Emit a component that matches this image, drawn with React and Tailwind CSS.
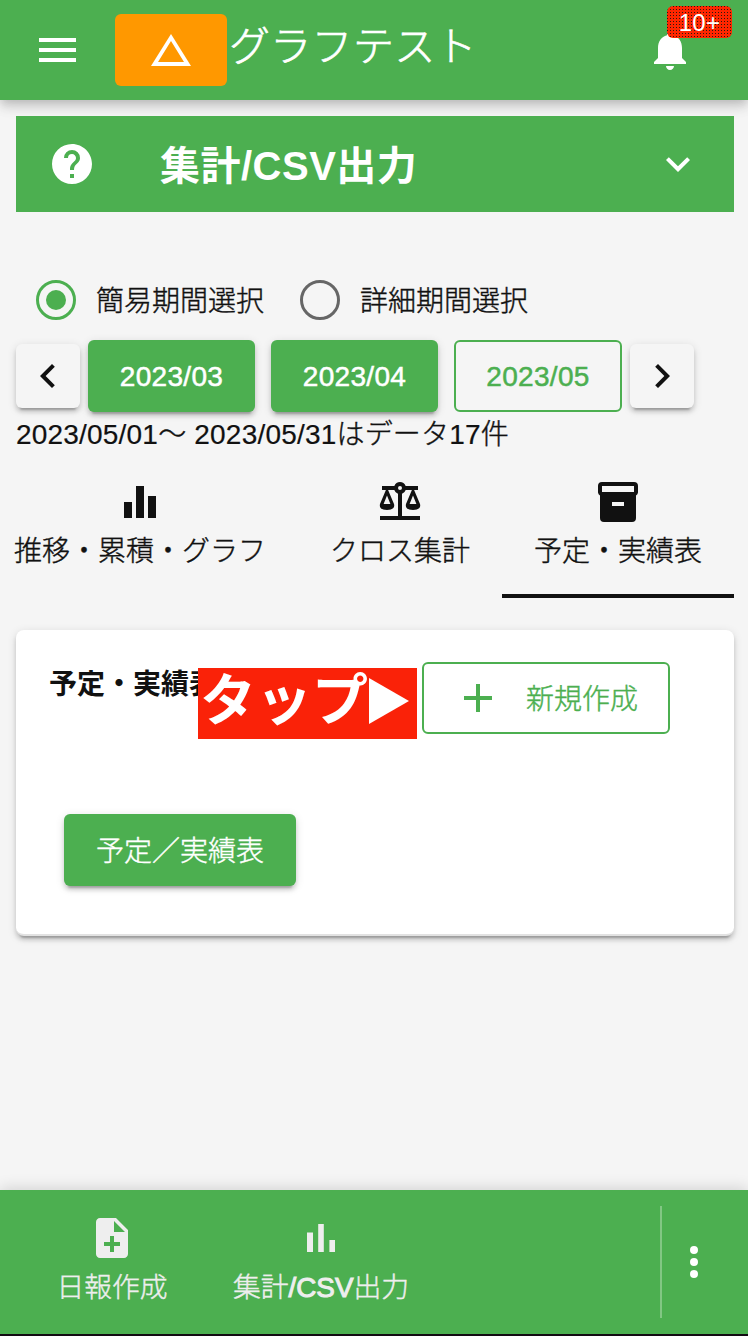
import React from "react";

const jp = "font-['Liberation_Sans','Noto_Sans_CJK_JP',sans-serif]";
const thin = "font-light [-webkit-text-stroke:0.4px_currentColor]";
const raised =
  "shadow-[0_6px_2px_-4px_rgba(0,0,0,0.2),0_4px_4px_rgba(0,0,0,0.14),0_2px_10px_rgba(0,0,0,0.12)]";

function Icon({ d, className = "" }) {
  return (
    <svg viewBox="0 0 24 24" className={"size-12 shrink-0 fill-current " + className}>
      <path d={d} fillRule="evenodd" />
    </svg>
  );
}

const paths = {
  menu: "M3 6h18.5v2H3zM3 11h18.5v2H3zM3 16h18.5v2H3z",
  bell: "M12 22c1.1 0 2-.9 2-2h-4c0 1.1.89 2 2 2zm6-6v-5c0-3.07-1.64-5.64-4.5-6.32V4c0-.83-.67-1.5-1.5-1.5s-1.5.67-1.5 1.5v.68C7.63 5.36 6 7.92 6 11v5l-2 2v1h16v-1l-2-2z",
  help: "M15.07,11.25L14.17,12.17C13.45,12.89 13,13.5 13,15H11V14.5C11,13.39 11.45,12.39 12.17,11.67L13.41,10.41C13.78,10.05 14,9.55 14,9C14,7.89 13.1,7 12,7A2,2 0 0,0 10,9H8A4,4 0 0,1 12,5A4,4 0 0,1 16,9C16,9.88 15.64,10.67 15.07,11.25M13,19H11V17H13M12,2A10,10 0 0,0 2,12A10,10 0 0,0 12,22A10,10 0 0,0 22,12C22,6.47 17.5,2 12,2Z",
  down: "M7.41,8.58L12,13.17L16.59,8.58L18,10L12,16L6,10L7.41,8.58Z",
  left: "M15.41,16.58L10.83,12L15.41,7.41L14,6L8,12L14,18L15.41,16.58Z",
  right: "M8.59,16.58L13.17,12L8.59,7.41L10,6L16,12L10,18L8.59,16.58Z",
  bars: "M4 12h4v8H4zM10 4h4v16h-4zM16 9h4v11h-4z",
  scale: "M12,2C10.73,2 9.6,2.8 9.18,4H3V6H4.95L2,13C1.53,15 3,16 5.5,16C8,16 9.56,15 9,13L6.05,6H9.17C9.5,6.85 10.15,7.5 11,7.83V19H2V21H22V19H13V7.82C13.85,7.5 14.5,6.85 14.82,6H17.95L15,13C14.53,15 16,16 18.5,16C21,16 22.56,15 22,13L19.05,6H21V4H14.83C14.4,2.8 13.27,2 12,2M12,4A1,1 0 0,1 13,5A1,1 0 0,1 12,6A1,1 0 0,1 11,5A1,1 0 0,1 12,4M5.5,8.75L7.2,13H3.8L5.5,8.75M18.5,8.75L20.2,13H16.8L18.5,8.75Z",
  archive: "M4 2h16a2 2 0 0 1 2 2v3.2a2 2 0 0 1-1 1.5V20a2 2 0 0 1-2 2H5a2 2 0 0 1-2-2V8.700a2 2 0 0 1-1-1.500V4a2 2 0 0 1 2-2zM4 4v3h16V4zM9 12v2h6v-2z",
  plus: "M19,13H13V19H11V13H5V11H11V5H13V11H19V13Z",
  note: "M14 2H6c-1.100 0-2 .9-2 2v16c0 1.100.9 2 2 2h12c1.100 0 2-.9 2-2V8l-6-6zm2 14h-3v3h-2v-3H8v-2h3v-3h2v3h3v2zm-3-7V3.500L18.500 9H13z",
  chart: "M5 9.200h3V19H5zM10.600 5h2.800v14h-2.800zM16.200 13H19v6h-2.800z",
  dots: "M12 8a2 2 0 1 0 0-4 2 2 0 0 0 0 4zM12 14a2 2 0 1 0 0-4 2 2 0 0 0 0 4zM12 20a2 2 0 1 0 0-4 2 2 0 0 0 0 4z",
};

function Header() {
  return (
    <header className="relative flex h-[100px] shrink-0 bg-[#4caf50] text-white shadow-[0_4px_8px_-2px_rgba(0,0,0,0.12),0_8px_10px_rgba(0,0,0,0.1),0_2px_20px_rgba(0,0,0,0.08)]">
      <Icon d={paths.menu} className="mt-[26px] ml-[33px]" />
      <div className="mt-[14px] ml-[34px] flex h-[72px] w-[112px] items-center justify-center rounded-md bg-[#ff9800]">
        <svg viewBox="0 0 40 32" className="h-8 w-10 fill-white">
          <path d="M20 0L40 32H0zM20 7L7 28H33z" fillRule="evenodd" />
        </svg>
      </div>
      <h1 className="mt-[17px] ml-[2px] text-[41px] leading-[60px] tracking-[0.3px] font-light [-webkit-text-stroke:0.7px_currentColor]">
        グラフテスト
      </h1>
      <div className="relative mt-[26px] mr-[54px] ml-auto">
        <Icon d={paths.bell} />
        <span className="absolute -top-5 left-[21px] flex h-8 w-[65px] items-center justify-center rounded-md bg-[#ff2600] bg-[conic-gradient(from_0deg_at_1px_1px,transparent_75%,#2a1a10_75%),conic-gradient(from_0deg_at_3px_3px,transparent_75%,#ff2600_75%)] bg-[size:3px_3px] pt-[2px] text-2xl tracking-[0.3px]">
          10+
        </span>
      </div>
    </header>
  );
}

function Radio({ on, label }) {
  return (
    <label className="flex items-center">
      <span
        className={
          "mr-5 flex size-10 items-center justify-center rounded-full " +
          (on ? "border-[3.5px] border-[#4caf50]" : "border-[3.5px] border-[#666]")
        }
      >
        {on && <span className="size-5 rounded-full bg-[#4caf50]" />}
      </span>
      <span className={"pt-[3px] text-[28px] leading-10 " + thin}>{label}</span>
    </label>
  );
}

function Month({ children, outlined }) {
  return (
    <button
      className={
        "h-[72px] rounded-md pt-[2px] text-[28px] tracking-[0.3px] [-webkit-text-stroke:0.5px_currentColor] " +
        (outlined
          ? "w-[168px] border-2 border-[#4caf50] text-[#4caf50]"
          : "w-[167px] bg-[#4caf50] text-white " + raised)
      }
    >
      {children}
    </button>
  );
}

function Arrow({ d }) {
  return (
    <button className={"flex size-16 items-center justify-center rounded-md bg-[#f5f5f5] " + raised}>
      <Icon d={d} />
    </button>
  );
}

function Tab({ d, label, className }) {
  return (
    <div className={"flex h-[120px] flex-col items-center " + className}>
      <Icon d={d} />
      <span className={"mt-[6px] text-[28px] leading-10 whitespace-nowrap " + thin}>{label}</span>
    </div>
  );
}

function BottomItem({ d, children, className }) {
  return (
    <div className={"flex flex-col items-center pt-6 text-[#eee] " + className}>
      <Icon d={d} />
      <span className={"mt-[6px] text-[27.8px] leading-10 whitespace-nowrap " + thin}>{children}</span>
    </div>
  );
}

export default function App() {
  return (
    <div className={"flex h-[1336px] w-[748px] flex-col overflow-hidden bg-[#f5f5f5] text-[#111] " + jp}>
      <Header />
      <main className="relative flex flex-1 flex-col pt-4 pr-[14px] pl-4">
        <section className="flex h-24 items-center bg-[#4caf50] pr-8 pl-8 text-white">
          <Icon d={paths.help} />
          <h2 className="mt-[3px] ml-16 text-[40px] leading-[60px] font-bold tracking-[0.5px]">集計/CSV出力</h2>
          <Icon d={paths.down} className="ml-auto" />
        </section>

        <div className="mt-[66.5px] flex h-[43px] gap-9 pl-5">
          <Radio on label="簡易期間選択" />
          <Radio label="詳細期間選択" />
        </div>

        <div className="mt-[18.5px] flex items-center">
          <Arrow d={paths.left} />
          <div className="mr-2 ml-2 flex gap-4">
            <Month>2023/03</Month>
            <Month>2023/04</Month>
            <Month outlined>2023/05</Month>
          </div>
          <Arrow d={paths.right} />
        </div>
        <p className="h-[42px] pt-[2px] text-[28px] leading-[42px] tracking-[0.2px]">
          <span className="[-webkit-text-stroke:0.2px_currentColor]">2023/05/01</span>
          <span className={thin}>〜</span>
          <span className="[-webkit-text-stroke:0.2px_currentColor]"> 2023/05/31</span>
          <span className={thin}>はデータ</span>
          <span className="[-webkit-text-stroke:0.2px_currentColor]">17</span>
          <span className={thin}>件</span>
        </p>

        <nav className="mt-[24px] flex">
          <Tab d={paths.bars} label="推移・累積・グラフ" className="w-[248px]" />
          <Tab d={paths.scale} label="クロス集計" className="ml-[34px] w-[204px]" />
          <Tab d={paths.archive} label="予定・実績表" className="w-[232px] border-b-4 border-[#111]" />
        </nav>

        <section className={"mt-8 h-[306px] rounded-lg border-b-2 border-[#e2e2e2] bg-white px-8 pt-8 " + raised}>
          <div className="relative flex h-[72px]">
            <h3 className="pt-[2px] pl-px text-[28px] leading-[42px] font-bold">予定・実績表</h3>
            <button className="ml-auto mr-8 flex h-[72px] w-[248px] items-center rounded-md border-2 border-[#4caf50] pl-[30px] text-[#4caf50]">
              <Icon d={paths.plus} />
              <span className={"mt-[3px] ml-6 text-[28px] " + thin}>新規作成</span>
            </button>
            <div className="absolute top-[6px] left-[150px] flex h-[71px] w-[219px] items-center bg-[#fa2208] pb-[5px] pl-[2px] text-white">
              <span className="w-[169px] text-[56px] leading-[66px] font-bold">タップ</span>
              <svg viewBox="0 0 40 46" className="h-[46px] w-10 fill-white">
                <path d="M0 0L40 23L0 46z" />
              </svg>
            </div>
          </div>
          <button className={"mt-20 ml-4 flex h-[72px] w-[232px] items-center justify-center rounded-md bg-[#4caf50] pt-[3px] text-[28px] text-white " + thin + " " + raised}>
            予定／実績表
          </button>
        </section>
      </main>

      <footer className="flex h-[146px] shrink-0 border-b-2 border-[#120a12] bg-[#4caf50] shadow-[0_-2px_14px_rgba(0,0,0,0.14)]">
        <BottomItem d={paths.note} className="ml-8 w-40">
          日報作成
        </BottomItem>
        <BottomItem d={paths.chart} className="ml-4 w-[226px]">
          集計<span className="[-webkit-text-stroke:1px_currentColor]">/CSV</span>出力
        </BottomItem>
        <div className="mt-4 ml-auto h-28 w-[2px] bg-white/30" />
        <div className="mt-12 mr-[30px] ml-2 text-white">
          <Icon d={paths.dots} />
        </div>
      </footer>
    </div>
  );
}
